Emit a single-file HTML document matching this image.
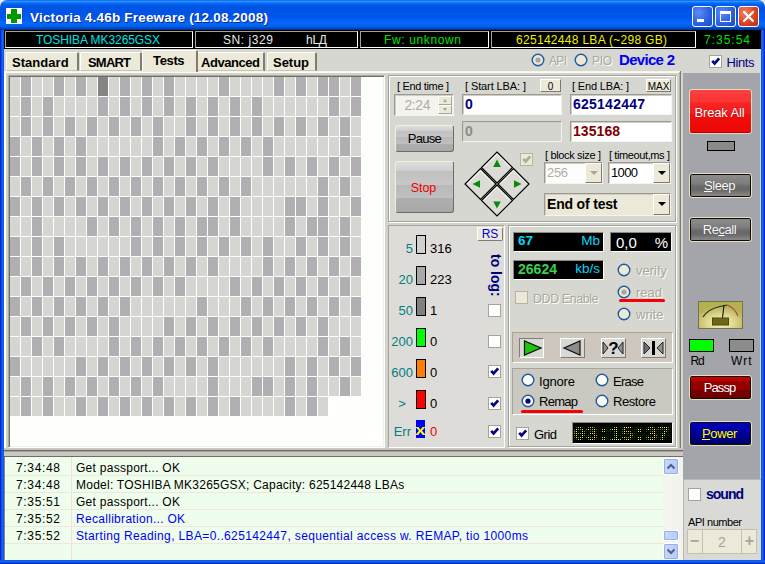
<!DOCTYPE html>
<html><head><meta charset="utf-8"><title>Victoria 4.46b Freeware</title>
<style>
html,body{margin:0;padding:0;background:#ece9d8;overflow:hidden;}
#w{position:relative;width:765px;height:564px;overflow:hidden;font-family:"Liberation Sans",sans-serif;}
#w div{position:absolute;}
.t{white-space:pre;}
</style></head>
<body><div id="w">
<div style="left:0px;top:0px;width:765px;height:30px;border-radius:7px 7px 0 0;background:linear-gradient(to bottom,#0058ee 0%,#3593ff 4%,#288eff 6%,#127dff 8%,#036ffc 10%,#0262ee 14%,#0057e5 20%,#0054e3 24%,#0055eb 56%,#005bf5 66%,#026afe 76%,#0062ef 86%,#0052d6 92%,#0040ab 96%,#003092 100%);"></div>
<div style="left:6px;top:8px;width:16px;height:16px;background:#fff;"></div>
<div style="left:11px;top:9px;width:6px;height:14px;background:#009a00;"></div>
<div style="left:7px;top:14px;width:14px;height:5px;background:#009a00;"></div>
<div class="t" style="left:30px;top:8.6px;height:18px;line-height:18px;font-size:13.5px;color:#fff;letter-spacing:0.20px;font-weight:bold;text-shadow:1px 1px 0 #0a2a8a;">Victoria 4.46b Freeware (12.08.2008)</div>
<div style="left:692px;top:6px;width:21px;height:21px;border:1px solid #fff;border-radius:3px;box-sizing:border-box;background:radial-gradient(circle at 30% 30%,#5a8cf8 0%,#2a5fe0 60%,#1c48c8 100%);"><div style="left:4px;top:12px;width:7px;height:3px;background:#fff"></div></div>
<div style="left:715px;top:6px;width:21px;height:21px;border:1px solid #fff;border-radius:3px;box-sizing:border-box;background:radial-gradient(circle at 30% 30%,#5a8cf8 0%,#2a5fe0 60%,#1c48c8 100%);"><div style="left:4px;top:4px;width:11px;height:11px;box-sizing:border-box;border:1px solid #fff;border-top:3px solid #fff"></div></div>
<div style="left:738px;top:6px;width:21px;height:21px;border:1px solid #fff;border-radius:3px;box-sizing:border-box;background:radial-gradient(circle at 30% 30%,#f08060 0%,#d84020 60%,#b82c10 100%);"><svg width="19" height="19" style="position:absolute;left:0;top:0"><path d="M5 5 L14 14 M14 5 L5 14" stroke="#fff" stroke-width="2.2" stroke-linecap="round"/></svg></div>
<div style="left:4px;top:30px;width:757px;height:530px;background:#d6d7d1;"></div>
<div style="left:4px;top:30px;width:757px;height:19px;background:#000;"></div>
<div style="left:5px;top:31px;width:188px;height:17px;box-sizing:border-box;border:1px solid;border-color:#a8a292 #fff #fff #a8a292;"></div>
<div style="left:195px;top:31px;width:163px;height:17px;box-sizing:border-box;border:1px solid;border-color:#a8a292 #fff #fff #a8a292;"></div>
<div style="left:360px;top:31px;width:129px;height:17px;box-sizing:border-box;border:1px solid;border-color:#a8a292 #fff #fff #a8a292;"></div>
<div style="left:491px;top:31px;width:205px;height:17px;box-sizing:border-box;border:1px solid;border-color:#a8a292 #fff #fff #a8a292;"></div>
<div class="t" style="left:36px;top:32px;height:16px;line-height:16px;font-size:12px;color:#00e0e0;letter-spacing:-0.07px;">TOSHIBA MK3265GSX</div>
<div class="t" style="left:223px;top:32px;height:16px;line-height:16px;font-size:12px;color:#e8e8e8;letter-spacing:0.57px;">SN: j329</div>
<div class="t" style="left:306px;top:32px;height:16px;line-height:16px;font-size:12px;color:#e8e8e8;letter-spacing:-0.24px;">hLД</div>
<div class="t" style="left:384px;top:32px;height:16px;line-height:16px;font-size:12px;color:#00e000;letter-spacing:0.63px;">Fw: unknown</div>
<div class="t" style="left:516px;top:32px;height:16px;line-height:16px;font-size:12px;color:#f0f000;letter-spacing:0.30px;">625142448 LBA (~298 GB)</div>
<div class="t" style="left:704px;top:32px;height:16px;line-height:16px;font-size:12px;color:#00e000;letter-spacing:0.99px;">7:35:54</div>
<div style="left:6px;top:52px;width:73px;height:19px;background:#ece9d8;box-sizing:border-box;border-left:1px solid #fff;border-top:1px solid #fff;border-right:2px solid #807c70;border-bottom:1px solid #c8c4b4;border-radius:2px 2px 0 0;"></div>
<div class="t" style="left:12px;top:55px;height:16px;line-height:16px;font-size:13px;color:#000;letter-spacing:0.04px;font-weight:bold;">Standard</div>
<div style="left:80px;top:52px;width:62px;height:19px;background:#ece9d8;box-sizing:border-box;border-left:1px solid #fff;border-top:1px solid #fff;border-right:2px solid #807c70;border-bottom:1px solid #c8c4b4;border-radius:2px 2px 0 0;"></div>
<div class="t" style="left:88px;top:55px;height:16px;line-height:16px;font-size:13px;color:#000;letter-spacing:-0.80px;font-weight:bold;">SMART</div>
<div style="left:197px;top:52px;width:68px;height:19px;background:#ece9d8;box-sizing:border-box;border-left:1px solid #fff;border-top:1px solid #fff;border-right:2px solid #807c70;border-bottom:1px solid #c8c4b4;border-radius:2px 2px 0 0;"></div>
<div class="t" style="left:201px;top:55px;height:16px;line-height:16px;font-size:13px;color:#000;letter-spacing:-0.45px;font-weight:bold;">Advanced</div>
<div style="left:267px;top:52px;width:50px;height:19px;background:#ece9d8;box-sizing:border-box;border-left:1px solid #fff;border-top:1px solid #fff;border-right:2px solid #807c70;border-bottom:1px solid #c8c4b4;border-radius:2px 2px 0 0;"></div>
<div class="t" style="left:273px;top:55px;height:16px;line-height:16px;font-size:13px;color:#000;letter-spacing:-0.03px;font-weight:bold;">Setup</div>
<div style="left:4px;top:71px;width:677px;height:380px;background:#d2d2cd;"></div>
<div style="left:4px;top:71px;width:676px;height:2px;background:linear-gradient(to bottom,#f4f2e6,#fff);"></div>
<div style="left:4px;top:71px;width:2px;height:380px;background:#fff;"></div>
<div style="left:680px;top:71px;width:1px;height:380px;background:#807c6c;"></div>
<div style="left:679px;top:72px;width:1px;height:379px;background:#b4b4ac;"></div>
<div style="left:142px;top:50px;width:56px;height:22px;background:#ece9d8;box-sizing:border-box;border-left:1px solid #fff;border-top:1px solid #fff;border-right:2px solid #807c70;border-radius:2px 2px 0 0;"></div>
<div class="t" style="left:153px;top:53px;height:16px;line-height:16px;font-size:13px;color:#000;letter-spacing:-0.35px;font-weight:bold;">Tests</div>
<svg width="14" height="14" style="position:absolute;left:530.5px;top:52.5px"><circle cx="7" cy="7" r="5.8" fill="#ece9d8" stroke="#1f5a9e" stroke-width="1.4"/><circle cx="7" cy="7" r="2.6" fill="#a8a498"/></svg>
<div class="t" style="left:549px;top:54px;height:15px;line-height:15px;font-size:12px;color:#aca899;letter-spacing:-0.67px;text-shadow:1px 1px 0 #fff;">API</div>
<svg width="14" height="14" style="position:absolute;left:574px;top:52.5px"><circle cx="7" cy="7" r="5.8" fill="#ece9d8" stroke="#1f5a9e" stroke-width="1.4"/></svg>
<div class="t" style="left:592px;top:54px;height:15px;line-height:15px;font-size:12px;color:#aca899;letter-spacing:-0.34px;text-shadow:1px 1px 0 #fff;">PIO</div>
<div class="t" style="left:619px;top:50px;height:19px;line-height:19px;font-size:15px;color:#0000f0;letter-spacing:-0.70px;font-weight:bold;">Device 2</div>
<div style="left:709px;top:55px;width:13px;height:13px;box-sizing:border-box;border:1px solid #a4a498;background:#fff;"><svg width="13" height="13" style="position:absolute;left:-1px;top:-1px"><path d="M3.2 5.8 L5.6 8.4 L10.2 3.4" fill="none" stroke="#08087c" stroke-width="2.7"/></svg></div>
<div class="t" style="left:726.5px;top:54px;height:18px;line-height:18px;font-size:13px;color:#000080;letter-spacing:-0.41px;">Hints</div>
<div style="left:8px;top:75px;width:377px;height:373px;box-sizing:border-box;border:1px solid;border-color:#aca899 #fff #fff #aca899;background:#fcfffc;box-shadow:inset 1px 1px 0 #716f64,inset -1px -1px 0 #f1efe2;"></div>
<svg width="352" height="340" shape-rendering="crispEdges" style="position:absolute;left:10px;top:77px"><rect x="0" y="0" width="10" height="19" fill="#d5d6d1"/><rect x="11" y="0" width="10" height="19" fill="#b1afb2"/><rect x="22" y="0" width="10" height="19" fill="#d5d6d1"/><rect x="33" y="0" width="10" height="19" fill="#d5d6d1"/><rect x="44" y="0" width="10" height="19" fill="#b1afb2"/><rect x="55" y="0" width="10" height="19" fill="#d5d6d1"/><rect x="66" y="0" width="10" height="19" fill="#b1afb2"/><rect x="77" y="0" width="10" height="19" fill="#d5d6d1"/><rect x="88" y="0" width="10" height="19" fill="#858585"/><rect x="99" y="0" width="10" height="19" fill="#d5d6d1"/><rect x="110" y="0" width="10" height="19" fill="#b1afb2"/><rect x="121" y="0" width="10" height="19" fill="#d5d6d1"/><rect x="132" y="0" width="10" height="19" fill="#b1afb2"/><rect x="143" y="0" width="10" height="19" fill="#d5d6d1"/><rect x="154" y="0" width="10" height="19" fill="#b1afb2"/><rect x="165" y="0" width="10" height="19" fill="#d5d6d1"/><rect x="176" y="0" width="10" height="19" fill="#d5d6d1"/><rect x="187" y="0" width="10" height="19" fill="#d5d6d1"/><rect x="198" y="0" width="10" height="19" fill="#d5d6d1"/><rect x="209" y="0" width="10" height="19" fill="#b1afb2"/><rect x="220" y="0" width="10" height="19" fill="#d5d6d1"/><rect x="231" y="0" width="10" height="19" fill="#d5d6d1"/><rect x="242" y="0" width="10" height="19" fill="#d5d6d1"/><rect x="253" y="0" width="10" height="19" fill="#d5d6d1"/><rect x="264" y="0" width="10" height="19" fill="#b1afb2"/><rect x="275" y="0" width="10" height="19" fill="#d5d6d1"/><rect x="286" y="0" width="10" height="19" fill="#b1afb2"/><rect x="297" y="0" width="10" height="19" fill="#d5d6d1"/><rect x="308" y="0" width="10" height="19" fill="#b1afb2"/><rect x="319" y="0" width="10" height="19" fill="#b1afb2"/><rect x="330" y="0" width="10" height="19" fill="#d5d6d1"/><rect x="341" y="0" width="10" height="19" fill="#b1afb2"/><rect x="0" y="20" width="10" height="19" fill="#d5d6d1"/><rect x="11" y="20" width="10" height="19" fill="#b1afb2"/><rect x="22" y="20" width="10" height="19" fill="#d5d6d1"/><rect x="33" y="20" width="10" height="19" fill="#b1afb2"/><rect x="44" y="20" width="10" height="19" fill="#d5d6d1"/><rect x="55" y="20" width="10" height="19" fill="#d5d6d1"/><rect x="66" y="20" width="10" height="19" fill="#d5d6d1"/><rect x="77" y="20" width="10" height="19" fill="#d5d6d1"/><rect x="88" y="20" width="10" height="19" fill="#b1afb2"/><rect x="99" y="20" width="10" height="19" fill="#d5d6d1"/><rect x="110" y="20" width="10" height="19" fill="#b1afb2"/><rect x="121" y="20" width="10" height="19" fill="#d5d6d1"/><rect x="132" y="20" width="10" height="19" fill="#b1afb2"/><rect x="143" y="20" width="10" height="19" fill="#d5d6d1"/><rect x="154" y="20" width="10" height="19" fill="#b1afb2"/><rect x="165" y="20" width="10" height="19" fill="#d5d6d1"/><rect x="176" y="20" width="10" height="19" fill="#b1afb2"/><rect x="187" y="20" width="10" height="19" fill="#d5d6d1"/><rect x="198" y="20" width="10" height="19" fill="#b1afb2"/><rect x="209" y="20" width="10" height="19" fill="#d5d6d1"/><rect x="220" y="20" width="10" height="19" fill="#b1afb2"/><rect x="231" y="20" width="10" height="19" fill="#d5d6d1"/><rect x="242" y="20" width="10" height="19" fill="#b1afb2"/><rect x="253" y="20" width="10" height="19" fill="#d5d6d1"/><rect x="264" y="20" width="10" height="19" fill="#d5d6d1"/><rect x="275" y="20" width="10" height="19" fill="#d5d6d1"/><rect x="286" y="20" width="10" height="19" fill="#d5d6d1"/><rect x="297" y="20" width="10" height="19" fill="#d5d6d1"/><rect x="308" y="20" width="10" height="19" fill="#d5d6d1"/><rect x="319" y="20" width="10" height="19" fill="#b1afb2"/><rect x="330" y="20" width="10" height="19" fill="#d5d6d1"/><rect x="341" y="20" width="10" height="19" fill="#b1afb2"/><rect x="0" y="40" width="10" height="19" fill="#d5d6d1"/><rect x="11" y="40" width="10" height="19" fill="#b1afb2"/><rect x="22" y="40" width="10" height="19" fill="#d5d6d1"/><rect x="33" y="40" width="10" height="19" fill="#b1afb2"/><rect x="44" y="40" width="10" height="19" fill="#d5d6d1"/><rect x="55" y="40" width="10" height="19" fill="#b1afb2"/><rect x="66" y="40" width="10" height="19" fill="#d5d6d1"/><rect x="77" y="40" width="10" height="19" fill="#b1afb2"/><rect x="88" y="40" width="10" height="19" fill="#d5d6d1"/><rect x="99" y="40" width="10" height="19" fill="#b1afb2"/><rect x="110" y="40" width="10" height="19" fill="#d5d6d1"/><rect x="121" y="40" width="10" height="19" fill="#b1afb2"/><rect x="132" y="40" width="10" height="19" fill="#d5d6d1"/><rect x="143" y="40" width="10" height="19" fill="#b1afb2"/><rect x="154" y="40" width="10" height="19" fill="#d5d6d1"/><rect x="165" y="40" width="10" height="19" fill="#d5d6d1"/><rect x="176" y="40" width="10" height="19" fill="#b1afb2"/><rect x="187" y="40" width="10" height="19" fill="#d5d6d1"/><rect x="198" y="40" width="10" height="19" fill="#b1afb2"/><rect x="209" y="40" width="10" height="19" fill="#d5d6d1"/><rect x="220" y="40" width="10" height="19" fill="#b1afb2"/><rect x="231" y="40" width="10" height="19" fill="#d5d6d1"/><rect x="242" y="40" width="10" height="19" fill="#b1afb2"/><rect x="253" y="40" width="10" height="19" fill="#d5d6d1"/><rect x="264" y="40" width="10" height="19" fill="#b1afb2"/><rect x="275" y="40" width="10" height="19" fill="#d5d6d1"/><rect x="286" y="40" width="10" height="19" fill="#b1afb2"/><rect x="297" y="40" width="10" height="19" fill="#d5d6d1"/><rect x="308" y="40" width="10" height="19" fill="#b1afb2"/><rect x="319" y="40" width="10" height="19" fill="#d5d6d1"/><rect x="330" y="40" width="10" height="19" fill="#b1afb2"/><rect x="341" y="40" width="10" height="19" fill="#d5d6d1"/><rect x="0" y="60" width="10" height="19" fill="#b1afb2"/><rect x="11" y="60" width="10" height="19" fill="#d5d6d1"/><rect x="22" y="60" width="10" height="19" fill="#b1afb2"/><rect x="33" y="60" width="10" height="19" fill="#d5d6d1"/><rect x="44" y="60" width="10" height="19" fill="#b1afb2"/><rect x="55" y="60" width="10" height="19" fill="#d5d6d1"/><rect x="66" y="60" width="10" height="19" fill="#b1afb2"/><rect x="77" y="60" width="10" height="19" fill="#d5d6d1"/><rect x="88" y="60" width="10" height="19" fill="#d5d6d1"/><rect x="99" y="60" width="10" height="19" fill="#d5d6d1"/><rect x="110" y="60" width="10" height="19" fill="#d5d6d1"/><rect x="121" y="60" width="10" height="19" fill="#d5d6d1"/><rect x="132" y="60" width="10" height="19" fill="#d5d6d1"/><rect x="143" y="60" width="10" height="19" fill="#b1afb2"/><rect x="154" y="60" width="10" height="19" fill="#d5d6d1"/><rect x="165" y="60" width="10" height="19" fill="#b1afb2"/><rect x="176" y="60" width="10" height="19" fill="#d5d6d1"/><rect x="187" y="60" width="10" height="19" fill="#b1afb2"/><rect x="198" y="60" width="10" height="19" fill="#d5d6d1"/><rect x="209" y="60" width="10" height="19" fill="#b1afb2"/><rect x="220" y="60" width="10" height="19" fill="#d5d6d1"/><rect x="231" y="60" width="10" height="19" fill="#b1afb2"/><rect x="242" y="60" width="10" height="19" fill="#d5d6d1"/><rect x="253" y="60" width="10" height="19" fill="#b1afb2"/><rect x="264" y="60" width="10" height="19" fill="#d5d6d1"/><rect x="275" y="60" width="10" height="19" fill="#d5d6d1"/><rect x="286" y="60" width="10" height="19" fill="#d5d6d1"/><rect x="297" y="60" width="10" height="19" fill="#d5d6d1"/><rect x="308" y="60" width="10" height="19" fill="#d5d6d1"/><rect x="319" y="60" width="10" height="19" fill="#d5d6d1"/><rect x="330" y="60" width="10" height="19" fill="#b1afb2"/><rect x="341" y="60" width="10" height="19" fill="#d5d6d1"/><rect x="0" y="80" width="10" height="19" fill="#b1afb2"/><rect x="11" y="80" width="10" height="19" fill="#d5d6d1"/><rect x="22" y="80" width="10" height="19" fill="#b1afb2"/><rect x="33" y="80" width="10" height="19" fill="#d5d6d1"/><rect x="44" y="80" width="10" height="19" fill="#b1afb2"/><rect x="55" y="80" width="10" height="19" fill="#d5d6d1"/><rect x="66" y="80" width="10" height="19" fill="#b1afb2"/><rect x="77" y="80" width="10" height="19" fill="#d5d6d1"/><rect x="88" y="80" width="10" height="19" fill="#b1afb2"/><rect x="99" y="80" width="10" height="19" fill="#d5d6d1"/><rect x="110" y="80" width="10" height="19" fill="#b1afb2"/><rect x="121" y="80" width="10" height="19" fill="#d5d6d1"/><rect x="132" y="80" width="10" height="19" fill="#b1afb2"/><rect x="143" y="80" width="10" height="19" fill="#d5d6d1"/><rect x="154" y="80" width="10" height="19" fill="#b1afb2"/><rect x="165" y="80" width="10" height="19" fill="#d5d6d1"/><rect x="176" y="80" width="10" height="19" fill="#b1afb2"/><rect x="187" y="80" width="10" height="19" fill="#d5d6d1"/><rect x="198" y="80" width="10" height="19" fill="#b1afb2"/><rect x="209" y="80" width="10" height="19" fill="#d5d6d1"/><rect x="220" y="80" width="10" height="19" fill="#d5d6d1"/><rect x="231" y="80" width="10" height="19" fill="#d5d6d1"/><rect x="242" y="80" width="10" height="19" fill="#d5d6d1"/><rect x="253" y="80" width="10" height="19" fill="#b1afb2"/><rect x="264" y="80" width="10" height="19" fill="#d5d6d1"/><rect x="275" y="80" width="10" height="19" fill="#b1afb2"/><rect x="286" y="80" width="10" height="19" fill="#d5d6d1"/><rect x="297" y="80" width="10" height="19" fill="#b1afb2"/><rect x="308" y="80" width="10" height="19" fill="#d5d6d1"/><rect x="319" y="80" width="10" height="19" fill="#b1afb2"/><rect x="330" y="80" width="10" height="19" fill="#d5d6d1"/><rect x="341" y="80" width="10" height="19" fill="#b1afb2"/><rect x="0" y="100" width="10" height="19" fill="#d5d6d1"/><rect x="11" y="100" width="10" height="19" fill="#b1afb2"/><rect x="22" y="100" width="10" height="19" fill="#d5d6d1"/><rect x="33" y="100" width="10" height="19" fill="#b1afb2"/><rect x="44" y="100" width="10" height="19" fill="#d5d6d1"/><rect x="55" y="100" width="10" height="19" fill="#b1afb2"/><rect x="66" y="100" width="10" height="19" fill="#d5d6d1"/><rect x="77" y="100" width="10" height="19" fill="#b1afb2"/><rect x="88" y="100" width="10" height="19" fill="#d5d6d1"/><rect x="99" y="100" width="10" height="19" fill="#b1afb2"/><rect x="110" y="100" width="10" height="19" fill="#d5d6d1"/><rect x="121" y="100" width="10" height="19" fill="#b1afb2"/><rect x="132" y="100" width="10" height="19" fill="#d5d6d1"/><rect x="143" y="100" width="10" height="19" fill="#b1afb2"/><rect x="154" y="100" width="10" height="19" fill="#d5d6d1"/><rect x="165" y="100" width="10" height="19" fill="#b1afb2"/><rect x="176" y="100" width="10" height="19" fill="#d5d6d1"/><rect x="187" y="100" width="10" height="19" fill="#b1afb2"/><rect x="198" y="100" width="10" height="19" fill="#d5d6d1"/><rect x="209" y="100" width="10" height="19" fill="#b1afb2"/><rect x="220" y="100" width="10" height="19" fill="#d5d6d1"/><rect x="231" y="100" width="10" height="19" fill="#b1afb2"/><rect x="242" y="100" width="10" height="19" fill="#d5d6d1"/><rect x="253" y="100" width="10" height="19" fill="#d5d6d1"/><rect x="264" y="100" width="10" height="19" fill="#d5d6d1"/><rect x="275" y="100" width="10" height="19" fill="#d5d6d1"/><rect x="286" y="100" width="10" height="19" fill="#d5d6d1"/><rect x="297" y="100" width="10" height="19" fill="#d5d6d1"/><rect x="308" y="100" width="10" height="19" fill="#b1afb2"/><rect x="319" y="100" width="10" height="19" fill="#d5d6d1"/><rect x="330" y="100" width="10" height="19" fill="#b1afb2"/><rect x="341" y="100" width="10" height="19" fill="#d5d6d1"/><rect x="0" y="120" width="10" height="19" fill="#b1afb2"/><rect x="11" y="120" width="10" height="19" fill="#d5d6d1"/><rect x="22" y="120" width="10" height="19" fill="#b1afb2"/><rect x="33" y="120" width="10" height="19" fill="#d5d6d1"/><rect x="44" y="120" width="10" height="19" fill="#b1afb2"/><rect x="55" y="120" width="10" height="19" fill="#d5d6d1"/><rect x="66" y="120" width="10" height="19" fill="#b1afb2"/><rect x="77" y="120" width="10" height="19" fill="#d5d6d1"/><rect x="88" y="120" width="10" height="19" fill="#b1afb2"/><rect x="99" y="120" width="10" height="19" fill="#d5d6d1"/><rect x="110" y="120" width="10" height="19" fill="#b1afb2"/><rect x="121" y="120" width="10" height="19" fill="#d5d6d1"/><rect x="132" y="120" width="10" height="19" fill="#b1afb2"/><rect x="143" y="120" width="10" height="19" fill="#d5d6d1"/><rect x="154" y="120" width="10" height="19" fill="#b1afb2"/><rect x="165" y="120" width="10" height="19" fill="#d5d6d1"/><rect x="176" y="120" width="10" height="19" fill="#b1afb2"/><rect x="187" y="120" width="10" height="19" fill="#d5d6d1"/><rect x="198" y="120" width="10" height="19" fill="#b1afb2"/><rect x="209" y="120" width="10" height="19" fill="#d5d6d1"/><rect x="220" y="120" width="10" height="19" fill="#b1afb2"/><rect x="231" y="120" width="10" height="19" fill="#d5d6d1"/><rect x="242" y="120" width="10" height="19" fill="#d5d6d1"/><rect x="253" y="120" width="10" height="19" fill="#d5d6d1"/><rect x="264" y="120" width="10" height="19" fill="#d5d6d1"/><rect x="275" y="120" width="10" height="19" fill="#b1afb2"/><rect x="286" y="120" width="10" height="19" fill="#b1afb2"/><rect x="297" y="120" width="10" height="19" fill="#d5d6d1"/><rect x="308" y="120" width="10" height="19" fill="#b1afb2"/><rect x="319" y="120" width="10" height="19" fill="#d5d6d1"/><rect x="330" y="120" width="10" height="19" fill="#d5d6d1"/><rect x="341" y="120" width="10" height="19" fill="#b1afb2"/><rect x="0" y="140" width="10" height="19" fill="#d5d6d1"/><rect x="11" y="140" width="10" height="19" fill="#d5d6d1"/><rect x="22" y="140" width="10" height="19" fill="#b1afb2"/><rect x="33" y="140" width="10" height="19" fill="#d5d6d1"/><rect x="44" y="140" width="10" height="19" fill="#d5d6d1"/><rect x="55" y="140" width="10" height="19" fill="#d5d6d1"/><rect x="66" y="140" width="10" height="19" fill="#d5d6d1"/><rect x="77" y="140" width="10" height="19" fill="#b1afb2"/><rect x="88" y="140" width="10" height="19" fill="#d5d6d1"/><rect x="99" y="140" width="10" height="19" fill="#b1afb2"/><rect x="110" y="140" width="10" height="19" fill="#d5d6d1"/><rect x="121" y="140" width="10" height="19" fill="#b1afb2"/><rect x="132" y="140" width="10" height="19" fill="#d5d6d1"/><rect x="143" y="140" width="10" height="19" fill="#b1afb2"/><rect x="154" y="140" width="10" height="19" fill="#d5d6d1"/><rect x="165" y="140" width="10" height="19" fill="#b1afb2"/><rect x="176" y="140" width="10" height="19" fill="#d5d6d1"/><rect x="187" y="140" width="10" height="19" fill="#b1afb2"/><rect x="198" y="140" width="10" height="19" fill="#b1afb2"/><rect x="209" y="140" width="10" height="19" fill="#d5d6d1"/><rect x="220" y="140" width="10" height="19" fill="#b1afb2"/><rect x="231" y="140" width="10" height="19" fill="#d5d6d1"/><rect x="242" y="140" width="10" height="19" fill="#d5d6d1"/><rect x="253" y="140" width="10" height="19" fill="#d5d6d1"/><rect x="264" y="140" width="10" height="19" fill="#d5d6d1"/><rect x="275" y="140" width="10" height="19" fill="#b1afb2"/><rect x="286" y="140" width="10" height="19" fill="#d5d6d1"/><rect x="297" y="140" width="10" height="19" fill="#b1afb2"/><rect x="308" y="140" width="10" height="19" fill="#b1afb2"/><rect x="319" y="140" width="10" height="19" fill="#d5d6d1"/><rect x="330" y="140" width="10" height="19" fill="#b1afb2"/><rect x="341" y="140" width="10" height="19" fill="#d5d6d1"/><rect x="0" y="160" width="10" height="19" fill="#b1afb2"/><rect x="11" y="160" width="10" height="19" fill="#d5d6d1"/><rect x="22" y="160" width="10" height="19" fill="#b1afb2"/><rect x="33" y="160" width="10" height="19" fill="#d5d6d1"/><rect x="44" y="160" width="10" height="19" fill="#b1afb2"/><rect x="55" y="160" width="10" height="19" fill="#d5d6d1"/><rect x="66" y="160" width="10" height="19" fill="#d5d6d1"/><rect x="77" y="160" width="10" height="19" fill="#d5d6d1"/><rect x="88" y="160" width="10" height="19" fill="#d5d6d1"/><rect x="99" y="160" width="10" height="19" fill="#d5d6d1"/><rect x="110" y="160" width="10" height="19" fill="#d5d6d1"/><rect x="121" y="160" width="10" height="19" fill="#b1afb2"/><rect x="132" y="160" width="10" height="19" fill="#d5d6d1"/><rect x="143" y="160" width="10" height="19" fill="#b1afb2"/><rect x="154" y="160" width="10" height="19" fill="#d5d6d1"/><rect x="165" y="160" width="10" height="19" fill="#b1afb2"/><rect x="176" y="160" width="10" height="19" fill="#d5d6d1"/><rect x="187" y="160" width="10" height="19" fill="#b1afb2"/><rect x="198" y="160" width="10" height="19" fill="#d5d6d1"/><rect x="209" y="160" width="10" height="19" fill="#b1afb2"/><rect x="220" y="160" width="10" height="19" fill="#d5d6d1"/><rect x="231" y="160" width="10" height="19" fill="#b1afb2"/><rect x="242" y="160" width="10" height="19" fill="#d5d6d1"/><rect x="253" y="160" width="10" height="19" fill="#b1afb2"/><rect x="264" y="160" width="10" height="19" fill="#d5d6d1"/><rect x="275" y="160" width="10" height="19" fill="#d5d6d1"/><rect x="286" y="160" width="10" height="19" fill="#b1afb2"/><rect x="297" y="160" width="10" height="19" fill="#d5d6d1"/><rect x="308" y="160" width="10" height="19" fill="#b1afb2"/><rect x="319" y="160" width="10" height="19" fill="#d5d6d1"/><rect x="330" y="160" width="10" height="19" fill="#b1afb2"/><rect x="341" y="160" width="10" height="19" fill="#d5d6d1"/><rect x="0" y="180" width="10" height="19" fill="#b1afb2"/><rect x="11" y="180" width="10" height="19" fill="#d5d6d1"/><rect x="22" y="180" width="10" height="19" fill="#b1afb2"/><rect x="33" y="180" width="10" height="19" fill="#d5d6d1"/><rect x="44" y="180" width="10" height="19" fill="#b1afb2"/><rect x="55" y="180" width="10" height="19" fill="#d5d6d1"/><rect x="66" y="180" width="10" height="19" fill="#b1afb2"/><rect x="77" y="180" width="10" height="19" fill="#d5d6d1"/><rect x="88" y="180" width="10" height="19" fill="#b1afb2"/><rect x="99" y="180" width="10" height="19" fill="#d5d6d1"/><rect x="110" y="180" width="10" height="19" fill="#b1afb2"/><rect x="121" y="180" width="10" height="19" fill="#d5d6d1"/><rect x="132" y="180" width="10" height="19" fill="#b1afb2"/><rect x="143" y="180" width="10" height="19" fill="#d5d6d1"/><rect x="154" y="180" width="10" height="19" fill="#b1afb2"/><rect x="165" y="180" width="10" height="19" fill="#d5d6d1"/><rect x="176" y="180" width="10" height="19" fill="#b1afb2"/><rect x="187" y="180" width="10" height="19" fill="#d5d6d1"/><rect x="198" y="180" width="10" height="19" fill="#b1afb2"/><rect x="209" y="180" width="10" height="19" fill="#d5d6d1"/><rect x="220" y="180" width="10" height="19" fill="#d5d6d1"/><rect x="231" y="180" width="10" height="19" fill="#d5d6d1"/><rect x="242" y="180" width="10" height="19" fill="#d5d6d1"/><rect x="253" y="180" width="10" height="19" fill="#b1afb2"/><rect x="264" y="180" width="10" height="19" fill="#d5d6d1"/><rect x="275" y="180" width="10" height="19" fill="#b1afb2"/><rect x="286" y="180" width="10" height="19" fill="#d5d6d1"/><rect x="297" y="180" width="10" height="19" fill="#b1afb2"/><rect x="308" y="180" width="10" height="19" fill="#d5d6d1"/><rect x="319" y="180" width="10" height="19" fill="#b1afb2"/><rect x="330" y="180" width="10" height="19" fill="#d5d6d1"/><rect x="341" y="180" width="10" height="19" fill="#b1afb2"/><rect x="0" y="200" width="10" height="19" fill="#d5d6d1"/><rect x="11" y="200" width="10" height="19" fill="#b1afb2"/><rect x="22" y="200" width="10" height="19" fill="#d5d6d1"/><rect x="33" y="200" width="10" height="19" fill="#b1afb2"/><rect x="44" y="200" width="10" height="19" fill="#d5d6d1"/><rect x="55" y="200" width="10" height="19" fill="#b1afb2"/><rect x="66" y="200" width="10" height="19" fill="#d5d6d1"/><rect x="77" y="200" width="10" height="19" fill="#b1afb2"/><rect x="88" y="200" width="10" height="19" fill="#d5d6d1"/><rect x="99" y="200" width="10" height="19" fill="#b1afb2"/><rect x="110" y="200" width="10" height="19" fill="#d5d6d1"/><rect x="121" y="200" width="10" height="19" fill="#b1afb2"/><rect x="132" y="200" width="10" height="19" fill="#d5d6d1"/><rect x="143" y="200" width="10" height="19" fill="#b1afb2"/><rect x="154" y="200" width="10" height="19" fill="#d5d6d1"/><rect x="165" y="200" width="10" height="19" fill="#b1afb2"/><rect x="176" y="200" width="10" height="19" fill="#d5d6d1"/><rect x="187" y="200" width="10" height="19" fill="#d5d6d1"/><rect x="198" y="200" width="10" height="19" fill="#d5d6d1"/><rect x="209" y="200" width="10" height="19" fill="#d5d6d1"/><rect x="220" y="200" width="10" height="19" fill="#b1afb2"/><rect x="231" y="200" width="10" height="19" fill="#d5d6d1"/><rect x="242" y="200" width="10" height="19" fill="#b1afb2"/><rect x="253" y="200" width="10" height="19" fill="#d5d6d1"/><rect x="264" y="200" width="10" height="19" fill="#b1afb2"/><rect x="275" y="200" width="10" height="19" fill="#d5d6d1"/><rect x="286" y="200" width="10" height="19" fill="#b1afb2"/><rect x="297" y="200" width="10" height="19" fill="#d5d6d1"/><rect x="308" y="200" width="10" height="19" fill="#b1afb2"/><rect x="319" y="200" width="10" height="19" fill="#d5d6d1"/><rect x="330" y="200" width="10" height="19" fill="#b1afb2"/><rect x="341" y="200" width="10" height="19" fill="#d5d6d1"/><rect x="0" y="220" width="10" height="19" fill="#b1afb2"/><rect x="11" y="220" width="10" height="19" fill="#d5d6d1"/><rect x="22" y="220" width="10" height="19" fill="#b1afb2"/><rect x="33" y="220" width="10" height="19" fill="#d5d6d1"/><rect x="44" y="220" width="10" height="19" fill="#b1afb2"/><rect x="55" y="220" width="10" height="19" fill="#d5d6d1"/><rect x="66" y="220" width="10" height="19" fill="#b1afb2"/><rect x="77" y="220" width="10" height="19" fill="#d5d6d1"/><rect x="88" y="220" width="10" height="19" fill="#b1afb2"/><rect x="99" y="220" width="10" height="19" fill="#d5d6d1"/><rect x="110" y="220" width="10" height="19" fill="#b1afb2"/><rect x="121" y="220" width="10" height="19" fill="#d5d6d1"/><rect x="132" y="220" width="10" height="19" fill="#d5d6d1"/><rect x="143" y="220" width="10" height="19" fill="#d5d6d1"/><rect x="154" y="220" width="10" height="19" fill="#d5d6d1"/><rect x="165" y="220" width="10" height="19" fill="#d5d6d1"/><rect x="176" y="220" width="10" height="19" fill="#d5d6d1"/><rect x="187" y="220" width="10" height="19" fill="#b1afb2"/><rect x="198" y="220" width="10" height="19" fill="#d5d6d1"/><rect x="209" y="220" width="10" height="19" fill="#d5d6d1"/><rect x="220" y="220" width="10" height="19" fill="#d5d6d1"/><rect x="231" y="220" width="10" height="19" fill="#b1afb2"/><rect x="242" y="220" width="10" height="19" fill="#d5d6d1"/><rect x="253" y="220" width="10" height="19" fill="#b1afb2"/><rect x="264" y="220" width="10" height="19" fill="#d5d6d1"/><rect x="275" y="220" width="10" height="19" fill="#b1afb2"/><rect x="286" y="220" width="10" height="19" fill="#d5d6d1"/><rect x="297" y="220" width="10" height="19" fill="#b1afb2"/><rect x="308" y="220" width="10" height="19" fill="#d5d6d1"/><rect x="319" y="220" width="10" height="19" fill="#b1afb2"/><rect x="330" y="220" width="10" height="19" fill="#d5d6d1"/><rect x="341" y="220" width="10" height="19" fill="#b1afb2"/><rect x="0" y="240" width="10" height="19" fill="#d5d6d1"/><rect x="11" y="240" width="10" height="19" fill="#b1afb2"/><rect x="22" y="240" width="10" height="19" fill="#d5d6d1"/><rect x="33" y="240" width="10" height="19" fill="#b1afb2"/><rect x="44" y="240" width="10" height="19" fill="#d5d6d1"/><rect x="55" y="240" width="10" height="19" fill="#b1afb2"/><rect x="66" y="240" width="10" height="19" fill="#d5d6d1"/><rect x="77" y="240" width="10" height="19" fill="#b1afb2"/><rect x="88" y="240" width="10" height="19" fill="#d5d6d1"/><rect x="99" y="240" width="10" height="19" fill="#b1afb2"/><rect x="110" y="240" width="10" height="19" fill="#d5d6d1"/><rect x="121" y="240" width="10" height="19" fill="#d5d6d1"/><rect x="132" y="240" width="10" height="19" fill="#d5d6d1"/><rect x="143" y="240" width="10" height="19" fill="#d5d6d1"/><rect x="154" y="240" width="10" height="19" fill="#b1afb2"/><rect x="165" y="240" width="10" height="19" fill="#d5d6d1"/><rect x="176" y="240" width="10" height="19" fill="#b1afb2"/><rect x="187" y="240" width="10" height="19" fill="#d5d6d1"/><rect x="198" y="240" width="10" height="19" fill="#b1afb2"/><rect x="209" y="240" width="10" height="19" fill="#d5d6d1"/><rect x="220" y="240" width="10" height="19" fill="#b1afb2"/><rect x="231" y="240" width="10" height="19" fill="#d5d6d1"/><rect x="242" y="240" width="10" height="19" fill="#b1afb2"/><rect x="253" y="240" width="10" height="19" fill="#d5d6d1"/><rect x="264" y="240" width="10" height="19" fill="#b1afb2"/><rect x="275" y="240" width="10" height="19" fill="#d5d6d1"/><rect x="286" y="240" width="10" height="19" fill="#b1afb2"/><rect x="297" y="240" width="10" height="19" fill="#d5d6d1"/><rect x="308" y="240" width="10" height="19" fill="#b1afb2"/><rect x="319" y="240" width="10" height="19" fill="#d5d6d1"/><rect x="330" y="240" width="10" height="19" fill="#d5d6d1"/><rect x="341" y="240" width="10" height="19" fill="#d5d6d1"/><rect x="0" y="260" width="10" height="19" fill="#d5d6d1"/><rect x="11" y="260" width="10" height="19" fill="#d5d6d1"/><rect x="22" y="260" width="10" height="19" fill="#b1afb2"/><rect x="33" y="260" width="10" height="19" fill="#d5d6d1"/><rect x="44" y="260" width="10" height="19" fill="#b1afb2"/><rect x="55" y="260" width="10" height="19" fill="#d5d6d1"/><rect x="66" y="260" width="10" height="19" fill="#d5d6d1"/><rect x="77" y="260" width="10" height="19" fill="#d5d6d1"/><rect x="88" y="260" width="10" height="19" fill="#d5d6d1"/><rect x="99" y="260" width="10" height="19" fill="#b1afb2"/><rect x="110" y="260" width="10" height="19" fill="#d5d6d1"/><rect x="121" y="260" width="10" height="19" fill="#b1afb2"/><rect x="132" y="260" width="10" height="19" fill="#d5d6d1"/><rect x="143" y="260" width="10" height="19" fill="#b1afb2"/><rect x="154" y="260" width="10" height="19" fill="#d5d6d1"/><rect x="165" y="260" width="10" height="19" fill="#b1afb2"/><rect x="176" y="260" width="10" height="19" fill="#d5d6d1"/><rect x="187" y="260" width="10" height="19" fill="#b1afb2"/><rect x="198" y="260" width="10" height="19" fill="#d5d6d1"/><rect x="209" y="260" width="10" height="19" fill="#b1afb2"/><rect x="220" y="260" width="10" height="19" fill="#d5d6d1"/><rect x="231" y="260" width="10" height="19" fill="#b1afb2"/><rect x="242" y="260" width="10" height="19" fill="#d5d6d1"/><rect x="253" y="260" width="10" height="19" fill="#b1afb2"/><rect x="264" y="260" width="10" height="19" fill="#d5d6d1"/><rect x="275" y="260" width="10" height="19" fill="#d5d6d1"/><rect x="286" y="260" width="10" height="19" fill="#d5d6d1"/><rect x="297" y="260" width="10" height="19" fill="#d5d6d1"/><rect x="308" y="260" width="10" height="19" fill="#b1afb2"/><rect x="319" y="260" width="10" height="19" fill="#d5d6d1"/><rect x="330" y="260" width="10" height="19" fill="#b1afb2"/><rect x="341" y="260" width="10" height="19" fill="#d5d6d1"/><rect x="0" y="280" width="10" height="19" fill="#b1afb2"/><rect x="11" y="280" width="10" height="19" fill="#d5d6d1"/><rect x="22" y="280" width="10" height="19" fill="#d5d6d1"/><rect x="33" y="280" width="10" height="19" fill="#d5d6d1"/><rect x="44" y="280" width="10" height="19" fill="#d5d6d1"/><rect x="55" y="280" width="10" height="19" fill="#d5d6d1"/><rect x="66" y="280" width="10" height="19" fill="#b1afb2"/><rect x="77" y="280" width="10" height="19" fill="#d5d6d1"/><rect x="88" y="280" width="10" height="19" fill="#b1afb2"/><rect x="99" y="280" width="10" height="19" fill="#d5d6d1"/><rect x="110" y="280" width="10" height="19" fill="#b1afb2"/><rect x="121" y="280" width="10" height="19" fill="#d5d6d1"/><rect x="132" y="280" width="10" height="19" fill="#b1afb2"/><rect x="143" y="280" width="10" height="19" fill="#d5d6d1"/><rect x="154" y="280" width="10" height="19" fill="#b1afb2"/><rect x="165" y="280" width="10" height="19" fill="#d5d6d1"/><rect x="176" y="280" width="10" height="19" fill="#b1afb2"/><rect x="187" y="280" width="10" height="19" fill="#d5d6d1"/><rect x="198" y="280" width="10" height="19" fill="#b1afb2"/><rect x="209" y="280" width="10" height="19" fill="#d5d6d1"/><rect x="220" y="280" width="10" height="19" fill="#d5d6d1"/><rect x="231" y="280" width="10" height="19" fill="#d5d6d1"/><rect x="242" y="280" width="10" height="19" fill="#d5d6d1"/><rect x="253" y="280" width="10" height="19" fill="#d5d6d1"/><rect x="264" y="280" width="10" height="19" fill="#d5d6d1"/><rect x="275" y="280" width="10" height="19" fill="#b1afb2"/><rect x="286" y="280" width="10" height="19" fill="#d5d6d1"/><rect x="297" y="280" width="10" height="19" fill="#b1afb2"/><rect x="308" y="280" width="10" height="19" fill="#d5d6d1"/><rect x="319" y="280" width="10" height="19" fill="#b1afb2"/><rect x="330" y="280" width="10" height="19" fill="#d5d6d1"/><rect x="341" y="280" width="10" height="19" fill="#b1afb2"/><rect x="0" y="300" width="10" height="19" fill="#d5d6d1"/><rect x="11" y="300" width="10" height="19" fill="#b1afb2"/><rect x="22" y="300" width="10" height="19" fill="#d5d6d1"/><rect x="33" y="300" width="10" height="19" fill="#b1afb2"/><rect x="44" y="300" width="10" height="19" fill="#d5d6d1"/><rect x="55" y="300" width="10" height="19" fill="#b1afb2"/><rect x="66" y="300" width="10" height="19" fill="#d5d6d1"/><rect x="77" y="300" width="10" height="19" fill="#b1afb2"/><rect x="88" y="300" width="10" height="19" fill="#d5d6d1"/><rect x="99" y="300" width="10" height="19" fill="#b1afb2"/><rect x="110" y="300" width="10" height="19" fill="#d5d6d1"/><rect x="121" y="300" width="10" height="19" fill="#b1afb2"/><rect x="132" y="300" width="10" height="19" fill="#d5d6d1"/><rect x="143" y="300" width="10" height="19" fill="#b1afb2"/><rect x="154" y="300" width="10" height="19" fill="#d5d6d1"/><rect x="165" y="300" width="10" height="19" fill="#d5d6d1"/><rect x="176" y="300" width="10" height="19" fill="#d5d6d1"/><rect x="187" y="300" width="10" height="19" fill="#d5d6d1"/><rect x="198" y="300" width="10" height="19" fill="#b1afb2"/><rect x="209" y="300" width="10" height="19" fill="#d5d6d1"/><rect x="220" y="300" width="10" height="19" fill="#d5d6d1"/><rect x="231" y="300" width="10" height="19" fill="#d5d6d1"/><rect x="242" y="300" width="10" height="19" fill="#b1afb2"/><rect x="253" y="300" width="10" height="19" fill="#b1afb2"/><rect x="264" y="300" width="10" height="19" fill="#d5d6d1"/><rect x="275" y="300" width="10" height="19" fill="#b1afb2"/><rect x="286" y="300" width="10" height="19" fill="#d5d6d1"/><rect x="297" y="300" width="10" height="19" fill="#b1afb2"/><rect x="308" y="300" width="10" height="19" fill="#d5d6d1"/><rect x="319" y="300" width="10" height="19" fill="#d5d6d1"/><rect x="330" y="300" width="10" height="19" fill="#b1afb2"/><rect x="341" y="300" width="10" height="19" fill="#d5d6d1"/><rect x="0" y="320" width="10" height="19" fill="#d5d6d1"/><rect x="11" y="320" width="10" height="19" fill="#b1afb2"/><rect x="22" y="320" width="10" height="19" fill="#d5d6d1"/><rect x="33" y="320" width="10" height="19" fill="#b1afb2"/><rect x="44" y="320" width="10" height="19" fill="#d5d6d1"/><rect x="55" y="320" width="10" height="19" fill="#d5d6d1"/><rect x="66" y="320" width="10" height="19" fill="#b1afb2"/><rect x="77" y="320" width="10" height="19" fill="#d5d6d1"/><rect x="88" y="320" width="10" height="19" fill="#b1afb2"/><rect x="99" y="320" width="10" height="19" fill="#d5d6d1"/><rect x="110" y="320" width="10" height="19" fill="#b1afb2"/><rect x="121" y="320" width="10" height="19" fill="#d5d6d1"/><rect x="132" y="320" width="10" height="19" fill="#b1afb2"/><rect x="143" y="320" width="10" height="19" fill="#d5d6d1"/><rect x="154" y="320" width="10" height="19" fill="#b1afb2"/><rect x="165" y="320" width="10" height="19" fill="#d5d6d1"/><rect x="176" y="320" width="10" height="19" fill="#b1afb2"/><rect x="187" y="320" width="10" height="19" fill="#d5d6d1"/><rect x="198" y="320" width="10" height="19" fill="#b1afb2"/><rect x="209" y="320" width="10" height="19" fill="#d5d6d1"/><rect x="220" y="320" width="10" height="19" fill="#b1afb2"/><rect x="231" y="320" width="10" height="19" fill="#d5d6d1"/><rect x="242" y="320" width="10" height="19" fill="#d5d6d1"/><rect x="253" y="320" width="10" height="19" fill="#d5d6d1"/><rect x="264" y="320" width="10" height="19" fill="#d5d6d1"/><rect x="275" y="320" width="10" height="19" fill="#b1afb2"/><rect x="286" y="320" width="10" height="19" fill="#d5d6d1"/><rect x="297" y="320" width="10" height="19" fill="#b1afb2"/><rect x="308" y="320" width="10" height="19" fill="#d5d6d1"/></svg>
<div style="left:4px;top:448px;width:679px;height:9px;background:#c9c9c4;"></div>
<div style="left:4px;top:450px;width:679px;height:1px;background:#6c6458;"></div>
<div style="left:4px;top:451px;width:679px;height:1px;background:#a8a49c;"></div>
<div style="left:4px;top:456px;width:679px;height:1px;background:#746c64;"></div>
<div style="left:388px;top:75px;width:288px;height:147px;box-sizing:border-box;background:#d6d7d1;border:1px solid #a4a49c;box-shadow:inset 1px 1px 0 #fff,1px 1px 0 #fff;"></div>
<div class="t" style="left:397px;top:79px;height:14px;line-height:14px;font-size:11px;color:#000;letter-spacing:-0.33px;">[ End time ]</div>
<div class="t" style="left:465px;top:79px;height:14px;line-height:14px;font-size:11px;color:#000;letter-spacing:-0.10px;">[ Start LBA: ]</div>
<div class="t" style="left:572px;top:79px;height:14px;line-height:14px;font-size:11px;color:#000;letter-spacing:-0.15px;">[ End LBA: ]</div>
<div style="left:540px;top:79px;width:21px;height:13px;box-sizing:border-box;border:1px solid;border-color:#fff #807c70 #807c70 #fff;background:#ece9d8;"></div>
<div class="t" style="left:540px;top:80px;height:13px;line-height:13px;font-size:10px;color:#000;width:21px;text-align:center;">0</div>
<div style="left:646px;top:79px;width:25px;height:13px;box-sizing:border-box;border:1px solid;border-color:#fff #807c70 #807c70 #fff;background:#ece9d8;"></div>
<div class="t" style="left:646px;top:80px;height:13px;line-height:13px;font-size:10px;color:#000;width:25px;text-align:center;">MAX</div>
<div style="left:394px;top:94px;width:60px;height:22px;box-sizing:border-box;border:1px solid;border-color:#9c9a90 #f4f4f0 #f4f4f0 #9c9a90;background:#f4f3ee;box-shadow:inset 1px 1px 0 #d0cec4;"></div>
<div class="t" style="left:404.5px;top:97px;height:16px;line-height:16px;font-size:14px;color:#b0aea4;letter-spacing:-0.42px;">2:24</div>
<div style="left:438px;top:96px;width:14px;height:9px;box-sizing:border-box;border:1px solid;border-color:#fff #a8a498 #a8a498 #fff;background:#ece9d8;"><div style="left:4px;top:2px;width:0;height:0;border:2.5px solid transparent;border-top:0;border-bottom:3px solid #a8a498"></div></div>
<div style="left:438px;top:105px;width:14px;height:9px;box-sizing:border-box;border:1px solid;border-color:#fff #a8a498 #a8a498 #fff;background:#ece9d8;"><div style="left:4px;top:2px;width:0;height:0;border:2.5px solid transparent;border-bottom:0;border-top:3px solid #a8a498"></div></div>
<div style="left:462px;top:94px;width:100px;height:21px;box-sizing:border-box;border:1px solid;border-color:#9c9a90 #f4f4f0 #f4f4f0 #9c9a90;background:#fff;box-shadow:inset 1px 1px 0 #d0cec4;"></div>
<div class="t" style="left:465px;top:96px;height:16px;line-height:16px;font-size:14px;color:#000080;font-weight:bold;">0</div>
<div style="left:570px;top:94px;width:102px;height:21px;box-sizing:border-box;border:1px solid;border-color:#9c9a90 #f4f4f0 #f4f4f0 #9c9a90;background:#fff;box-shadow:inset 1px 1px 0 #d0cec4;"></div>
<div class="t" style="left:573px;top:96px;height:16px;line-height:16px;font-size:14px;color:#000080;letter-spacing:0.24px;font-weight:bold;">625142447</div>
<div style="left:462px;top:121px;width:100px;height:21px;box-sizing:border-box;border:1px solid;border-color:#9c9a90 #f4f4f0 #f4f4f0 #9c9a90;background:#d4d4ce;box-shadow:inset 1px 1px 0 #d0cec4;"></div>
<div class="t" style="left:465px;top:123px;height:16px;line-height:16px;font-size:14px;color:#8c8c88;font-weight:bold;">0</div>
<div style="left:570px;top:121px;width:102px;height:21px;box-sizing:border-box;border:1px solid;border-color:#9c9a90 #f4f4f0 #f4f4f0 #9c9a90;background:#fff;box-shadow:inset 1px 1px 0 #d0cec4;"></div>
<div class="t" style="left:573px;top:123px;height:16px;line-height:16px;font-size:14px;color:#800000;letter-spacing:0.06px;font-weight:bold;">135168</div>
<div style="left:395px;top:125px;width:59px;height:27px;box-sizing:border-box;border:1px solid;border-color:#f4f0d8 #6c6c68 #6c6c68 #f4f0d8;border-radius:3px;background:linear-gradient(to bottom,#dedede 0%,#cecece 18%,#c0c0c0 19%,#c8c8c8 45%,#b8b8b8 46%,#c0c0c0 72%,#aeaeae 73%,#a8a8a8 100%);"></div>
<div class="t" style="left:395px;top:125px;height:27px;line-height:27px;font-size:13px;color:#000;letter-spacing:-0.72px;width:59px;text-align:center;">Pause</div>
<div style="left:395px;top:161px;width:59px;height:52px;box-sizing:border-box;border:1px solid;border-color:#f4f0d8 #6c6c68 #6c6c68 #f4f0d8;border-radius:3px;background:linear-gradient(to bottom,#dedede 0%,#cecece 18%,#c0c0c0 19%,#c8c8c8 45%,#b8b8b8 46%,#c0c0c0 72%,#aeaeae 73%,#a8a8a8 100%);"></div>
<div class="t" style="left:394px;top:162px;height:52px;line-height:52px;font-size:12.5px;color:#f00000;letter-spacing:-0.07px;width:59px;text-align:center;">Stop</div>
<svg width="72" height="72" style="position:absolute;left:461px;top:147.5px" viewBox="-36 -36 72 72"><g><polygon points="0,-32.0 15.5,-16.5 0,-1.0 -15.5,-16.5" fill="#dcdcd6" stroke="#000" stroke-width="1.2"/><polyline points="-13.5,-16.5 0,-30.0 13.5,-16.5" fill="none" stroke="#fff" stroke-width="1"/><polygon points="16.5,-15.5 32.0,0 16.5,15.5 1.0,0" fill="#dcdcd6" stroke="#000" stroke-width="1.2"/><polyline points="3.0,0 16.5,-13.5 30.0,0" fill="none" stroke="#fff" stroke-width="1"/><polygon points="0,1.0 15.5,16.5 0,32.0 -15.5,16.5" fill="#dcdcd6" stroke="#000" stroke-width="1.2"/><polyline points="-13.5,16.5 0,3.0 13.5,16.5" fill="none" stroke="#fff" stroke-width="1"/><polygon points="-16.5,-15.5 -1.0,0 -16.5,15.5 -32.0,0" fill="#dcdcd6" stroke="#000" stroke-width="1.2"/><polyline points="-30.0,0 -16.5,-13.5 -3.0,0" fill="none" stroke="#fff" stroke-width="1"/><polygon points="0,-24.5 3.8,-17 -3.8,-17" fill="#0a8a0a"/><polygon points="0,24.5 3.8,17.5 -3.8,17.5" fill="#0a8a0a"/><polygon points="-24.5,0 -17,-3.8 -17,3.8" fill="#0a8a0a"/><polygon points="24.5,0 17,-3.8 17,3.8" fill="#0a8a0a"/></g></svg>
<div style="left:520px;top:153px;width:13px;height:13px;box-sizing:border-box;border:1px solid #b8b4a0;background:#ece9d8;"><svg width="13" height="13" style="position:absolute;left:-1px;top:-1px"><path d="M3.2 5.8 L5.6 8.4 L10.2 3.4" fill="none" stroke="#b0ac9c" stroke-width="2.7"/></svg></div>
<div class="t" style="left:545px;top:148px;height:14px;line-height:14px;font-size:11px;color:#000;letter-spacing:-0.35px;">[ block size ]</div>
<div class="t" style="left:609px;top:148px;height:14px;line-height:14px;font-size:11px;color:#000;letter-spacing:-0.39px;">[ timeout,ms ]</div>
<div style="left:544px;top:162px;width:59px;height:22px;box-sizing:border-box;border:1px solid;border-color:#9c9a90 #f4f4f0 #f4f4f0 #9c9a90;background:#fdfdfb;box-shadow:inset 1px 1px 0 #d0cec4;"></div>
<div style="left:585px;top:163px;width:17px;height:20px;box-sizing:border-box;border:1px solid;border-color:#fff #807c70 #807c70 #fff;background:#ece9d8;"><div style="left:3.5px;top:7px;width:0;height:0;border:4px solid transparent;border-bottom:0;border-top:4px solid #a8a498"></div></div>
<div class="t" style="left:547px;top:163px;height:20px;line-height:20px;font-size:13px;color:#b0aea4;letter-spacing:-0.35px;">256</div>
<div style="left:608px;top:162px;width:63px;height:22px;box-sizing:border-box;border:1px solid;border-color:#9c9a90 #f4f4f0 #f4f4f0 #9c9a90;background:#fff;box-shadow:inset 1px 1px 0 #d0cec4;"></div>
<div style="left:653px;top:163px;width:17px;height:20px;box-sizing:border-box;border:1px solid;border-color:#fff #807c70 #807c70 #fff;background:#ece9d8;"><div style="left:3.5px;top:7px;width:0;height:0;border:4px solid transparent;border-bottom:0;border-top:4px solid #000"></div></div>
<div class="t" style="left:611px;top:163px;height:20px;line-height:20px;font-size:13px;color:#000;letter-spacing:-0.64px;">1000</div>
<div style="left:544px;top:193px;width:127px;height:23px;box-sizing:border-box;border:1px solid;border-color:#9c9a90 #f4f4f0 #f4f4f0 #9c9a90;background:#ece9d8;box-shadow:inset 1px 1px 0 #d0cec4;"></div>
<div style="left:653px;top:194px;width:17px;height:21px;box-sizing:border-box;border:1px solid;border-color:#fff #807c70 #807c70 #fff;background:#ece9d8;"><div style="left:3.5px;top:7px;width:0;height:0;border:4px solid transparent;border-bottom:0;border-top:4px solid #000"></div></div>
<div class="t" style="left:547px;top:194px;height:21px;line-height:21px;font-size:14px;color:#000;letter-spacing:-0.18px;font-weight:bold;">End of test</div>
<div style="left:388px;top:225px;width:117px;height:223px;box-sizing:border-box;background:#dedcd8;border:1px solid;border-color:#a4a49c #fff #fff #a4a49c;"></div>
<div style="left:416px;top:235px;width:10px;height:19px;box-sizing:border-box;border:1px solid #000;background:#d0d0d0;"></div>
<div class="t" style="left:380px;top:241px;height:16px;line-height:16px;font-size:13px;color:#008080;width:33px;text-align:right;">5</div>
<div class="t" style="left:430px;top:241px;height:16px;line-height:16px;font-size:13px;color:#000;">316</div>
<div style="left:416px;top:266px;width:10px;height:19px;box-sizing:border-box;border:1px solid #000;background:#a8a8a8;"></div>
<div class="t" style="left:380px;top:272px;height:16px;line-height:16px;font-size:13px;color:#008080;width:33px;text-align:right;">20</div>
<div class="t" style="left:430px;top:272px;height:16px;line-height:16px;font-size:13px;color:#000;">223</div>
<div style="left:416px;top:297px;width:10px;height:19px;box-sizing:border-box;border:1px solid #000;background:#808080;"></div>
<div class="t" style="left:380px;top:303px;height:16px;line-height:16px;font-size:13px;color:#008080;width:33px;text-align:right;">50</div>
<div class="t" style="left:430px;top:303px;height:16px;line-height:16px;font-size:13px;color:#000;">1</div>
<div style="left:416px;top:328px;width:10px;height:19px;box-sizing:border-box;border:1px solid #000;background:#00ff00;"></div>
<div class="t" style="left:380px;top:334px;height:16px;line-height:16px;font-size:13px;color:#008080;width:33px;text-align:right;">200</div>
<div class="t" style="left:430px;top:334px;height:16px;line-height:16px;font-size:13px;color:#000;">0</div>
<div style="left:416px;top:359px;width:10px;height:19px;box-sizing:border-box;border:1px solid #000;background:#ff8000;"></div>
<div class="t" style="left:380px;top:365px;height:16px;line-height:16px;font-size:13px;color:#008080;width:33px;text-align:right;">600</div>
<div class="t" style="left:430px;top:365px;height:16px;line-height:16px;font-size:13px;color:#000;">0</div>
<div style="left:416px;top:390px;width:10px;height:19px;box-sizing:border-box;border:1px solid #000;background:#ff0000;"></div>
<div class="t" style="left:380px;top:396px;height:16px;line-height:16px;font-size:13px;color:#008080;width:33px;text-align:right;">&gt;  </div>
<div class="t" style="left:430px;top:396px;height:16px;line-height:16px;font-size:13px;color:#000;">0</div>
<div style="left:416px;top:420px;width:9px;height:18px;background:#0000ff;"></div>
<div class="t" style="left:416px;top:422px;height:16px;line-height:16px;font-size:14px;color:#ffff00;font-weight:bold;width:9px;text-align:center;transform:scaleX(1.35);">x</div>
<div class="t" style="left:380px;top:424px;height:16px;line-height:16px;font-size:13px;color:#008080;width:31px;text-align:right;">Err</div>
<div class="t" style="left:430px;top:424px;height:16px;line-height:16px;font-size:13px;color:#f00000;">0</div>
<div style="left:477px;top:227px;width:26px;height:14px;box-sizing:border-box;border:1px solid;border-color:#fff #807c70 #807c70 #fff;background:#ece9d8;border-radius:2px;"></div>
<div class="t" style="left:477px;top:227px;height:14px;line-height:14px;font-size:12px;color:#0000e0;width:26px;text-align:center;">RS</div>
<div class="t" style="left:475px;top:266px;width:42px;height:18px;line-height:18px;font-size:14px;font-weight:bold;color:#000080;text-align:center;transform:rotate(90deg);transform-origin:50% 50%;">to log:</div>
<div style="left:488px;top:304px;width:13px;height:13px;box-sizing:border-box;border:1px solid #a4a498;background:#fff;"></div>
<div style="left:488px;top:335px;width:13px;height:13px;box-sizing:border-box;border:1px solid #a4a498;background:#fff;"></div>
<div style="left:488px;top:365px;width:13px;height:13px;box-sizing:border-box;border:1px solid #a4a498;background:#fff;"><svg width="13" height="13" style="position:absolute;left:-1px;top:-1px"><path d="M3.2 5.8 L5.6 8.4 L10.2 3.4" fill="none" stroke="#08087c" stroke-width="2.7"/></svg></div>
<div style="left:488px;top:397px;width:13px;height:13px;box-sizing:border-box;border:1px solid #a4a498;background:#fff;"><svg width="13" height="13" style="position:absolute;left:-1px;top:-1px"><path d="M3.2 5.8 L5.6 8.4 L10.2 3.4" fill="none" stroke="#08087c" stroke-width="2.7"/></svg></div>
<div style="left:488px;top:425px;width:13px;height:13px;box-sizing:border-box;border:1px solid #a4a498;background:#fff;"><svg width="13" height="13" style="position:absolute;left:-1px;top:-1px"><path d="M3.2 5.8 L5.6 8.4 L10.2 3.4" fill="none" stroke="#08087c" stroke-width="2.7"/></svg></div>
<div style="left:508px;top:225px;width:168px;height:222px;box-sizing:border-box;background:#d6d7d1;border:1px solid #a4a49c;box-shadow:inset 1px 1px 0 #fff,1px 1px 0 #fff;"></div>
<div style="left:513px;top:232px;width:91px;height:20px;box-sizing:border-box;border:1px solid;border-color:#8c8a80 #fff #fff #8c8a80;background:#000;"></div>
<div class="t" style="left:518px;top:233px;height:16px;line-height:16px;font-size:13.5px;color:#00d8f8;font-weight:bold;">67</div>
<div class="t" style="left:559px;top:233px;height:16px;line-height:16px;font-size:13.5px;color:#00d8f8;width:41px;text-align:right;">Mb</div>
<div style="left:610px;top:232px;width:62px;height:20px;box-sizing:border-box;border:1px solid;border-color:#8c8a80 #fff #fff #8c8a80;background:#000;"></div>
<div class="t" style="left:616px;top:234px;height:17px;line-height:17px;font-size:15px;color:#fff;">0,0</div>
<div class="t" style="left:620px;top:234px;height:17px;line-height:17px;font-size:15px;color:#fff;width:48px;text-align:right;">%</div>
<div style="left:513px;top:260px;width:91px;height:20px;box-sizing:border-box;border:1px solid;border-color:#8c8a80 #fff #fff #8c8a80;background:#000;"></div>
<div class="t" style="left:518px;top:261px;height:16px;line-height:16px;font-size:14px;color:#38d050;letter-spacing:0.02px;font-weight:bold;">26624</div>
<div class="t" style="left:559px;top:261px;height:16px;line-height:16px;font-size:13.5px;color:#00d8f8;width:41px;text-align:right;">kb/s</div>
<svg width="14" height="14" style="position:absolute;left:617px;top:262.5px"><circle cx="7" cy="7" r="5.8" fill="#ece9d8" stroke="#1f5a9e" stroke-width="1.4"/></svg>
<div class="t" style="left:636px;top:263px;height:16px;line-height:16px;font-size:13px;color:#aca899;text-shadow:1px 1px 0 #fff;">verify</div>
<svg width="14" height="14" style="position:absolute;left:617px;top:284.5px"><circle cx="7" cy="7" r="5.8" fill="#ece9d8" stroke="#1f5a9e" stroke-width="1.4"/><circle cx="7" cy="7" r="2.6" fill="#a8a498"/></svg>
<div class="t" style="left:636px;top:285px;height:16px;line-height:16px;font-size:13px;color:#aca899;text-shadow:1px 1px 0 #fff;">read</div>
<svg width="14" height="14" style="position:absolute;left:617px;top:306.5px"><circle cx="7" cy="7" r="5.8" fill="#ece9d8" stroke="#1f5a9e" stroke-width="1.4"/></svg>
<div class="t" style="left:636px;top:307px;height:16px;line-height:16px;font-size:13px;color:#aca899;text-shadow:1px 1px 0 #fff;">write</div>
<div style="left:619px;top:299px;width:46px;height:3px;background:#f40008;border-radius:1.5px;"></div>
<div style="left:515px;top:291px;width:13px;height:13px;box-sizing:border-box;border:1px solid #b8b4a0;background:#ece9d8;"></div>
<div class="t" style="left:533px;top:291px;height:16px;line-height:16px;font-size:12.5px;color:#aca899;letter-spacing:-0.44px;text-shadow:1px 1px 0 #fff;">DDD Enable</div>
<div style="left:512px;top:332px;width:161px;height:31px;box-sizing:border-box;background:#cdc7bd;border:1px solid;border-color:#a4a49c #fff #fff #a4a49c;"></div>
<div style="left:519px;top:338px;width:25px;height:20px;box-sizing:border-box;border:1px solid;border-color:#807c70 #fff #fff #807c70;background:#d8d8d4;"></div>
<div style="left:560px;top:338px;width:25px;height:20px;box-sizing:border-box;border:1px solid;border-color:#fff #807c70 #807c70 #fff;background:#d8d8d4;"></div>
<div style="left:601px;top:338px;width:25px;height:20px;box-sizing:border-box;border:1px solid;border-color:#fff #807c70 #807c70 #fff;background:#d8d8d4;"></div>
<div style="left:641px;top:338px;width:25px;height:20px;box-sizing:border-box;border:1px solid;border-color:#fff #807c70 #807c70 #fff;background:#d8d8d4;"></div>
<svg width="160" height="31" style="position:absolute;left:512px;top:332px"><polygon points="12.5,9 12.5,23 29,16" fill="#22c410" stroke="#001800" stroke-width="1.2"/><polygon points="68,9 68,23 52,16" fill="#8c8c8c" stroke="#101010" stroke-width="1.2"/><polygon points="91,10 91,22 96,16" fill="#909090" stroke="#202020" stroke-width="1"/><polygon points="111,10 111,22 106,16" fill="#909090" stroke="#202020" stroke-width="1"/><polygon points="132,10 132,22 138,16" fill="#707070" stroke="#202020" stroke-width="1"/><polygon points="151,10 151,22 145,16" fill="#909090" stroke="#202020" stroke-width="1"/><rect x="140" y="9" width="3" height="14" fill="#000"/></svg>
<div class="t" style="left:601px;top:338.5px;height:20px;line-height:20px;font-size:17px;color:#000;font-weight:bold;width:25px;text-align:center;">?</div>
<div style="left:512px;top:368px;width:161px;height:47px;box-sizing:border-box;background:#c9c9c1;border:1px solid;border-color:#a4a49c #fff #fff #a4a49c;"></div>
<svg width="14" height="14" style="position:absolute;left:520.5px;top:373px"><circle cx="7" cy="7" r="5.8" fill="#fcfcf8" stroke="#1f5a9e" stroke-width="1.4"/></svg>
<div class="t" style="left:539px;top:373.5px;height:16px;line-height:16px;font-size:13px;color:#000;letter-spacing:-0.17px;">Ignore</div>
<svg width="14" height="14" style="position:absolute;left:520.5px;top:393.5px"><circle cx="7" cy="7" r="5.8" fill="#fcfcf8" stroke="#1f5a9e" stroke-width="1.4"/><circle cx="7" cy="7" r="2.6" fill="#000080"/></svg>
<div class="t" style="left:539px;top:393.5px;height:16px;line-height:16px;font-size:13px;color:#000;letter-spacing:-0.73px;">Remap</div>
<svg width="14" height="14" style="position:absolute;left:594.5px;top:373px"><circle cx="7" cy="7" r="5.8" fill="#fcfcf8" stroke="#1f5a9e" stroke-width="1.4"/></svg>
<div class="t" style="left:613px;top:373.5px;height:16px;line-height:16px;font-size:13px;color:#000;letter-spacing:-0.74px;">Erase</div>
<svg width="14" height="14" style="position:absolute;left:594.5px;top:393.5px"><circle cx="7" cy="7" r="5.8" fill="#fcfcf8" stroke="#1f5a9e" stroke-width="1.4"/></svg>
<div class="t" style="left:613px;top:393.5px;height:16px;line-height:16px;font-size:13px;color:#000;letter-spacing:-0.42px;">Restore</div>
<div style="left:521px;top:410px;width:62px;height:3px;background:#f40008;border-radius:1.5px;"></div>
<div style="left:516px;top:427px;width:13px;height:13px;box-sizing:border-box;border:1px solid #a4a498;background:#fff;"><svg width="13" height="13" style="position:absolute;left:-1px;top:-1px"><path d="M3.2 5.8 L5.6 8.4 L10.2 3.4" fill="none" stroke="#08087c" stroke-width="2.7"/></svg></div>
<div class="t" style="left:534px;top:426px;height:17px;line-height:17px;font-size:13px;color:#000;letter-spacing:-0.52px;">Grid</div>
<div style="left:572px;top:422px;width:101px;height:22px;box-sizing:border-box;border:1px solid;border-color:#8c8a80 #fff #fff #8c8a80;background:#000;"></div>
<div style="left:573px;top:423px;width:99px;height:20px;background:#002c00;overflow:hidden;"><div class="t" style="left:0;top:2px;width:99px;height:20px;line-height:20px;font-family:'Liberation Mono',monospace;font-size:21px;font-weight:bold;color:#ffff00;letter-spacing:-0.6px;">03:15:37</div><div style="left:0;top:0;width:99px;height:20px;background:repeating-linear-gradient(to right,#000 0,#000 1px,transparent 1px,transparent 2px),repeating-linear-gradient(to bottom,transparent 0,transparent 1px,#000 1px,#000 2px);"></div><div style="left:0;top:0;width:99px;height:3px;background:#000"></div><div style="left:0;top:18px;width:99px;height:2px;background:#000"></div></div>
<div style="left:683px;top:73px;width:77px;height:406px;background:#a4a5ab;"></div>
<div style="left:689px;top:89px;width:63px;height:45px;box-sizing:border-box;border:1px solid #e8e0bc;border-radius:3px;background:linear-gradient(to bottom,#fc4040 0%,#fa3434 28%,#f82424 30%,#f61a1a 55%,#f20e0e 57%,#ee0808 100%);box-shadow:inset 0 -1px 0 #a80000;"></div>
<div class="t" style="left:688px;top:90px;height:45px;line-height:45px;font-size:13px;color:#fff;letter-spacing:-0.13px;width:63px;text-align:center;text-shadow:0 0 1px rgba(0,0,0,.5);">Break All</div>
<div style="left:707px;top:141px;width:28px;height:10px;box-sizing:border-box;border:1px solid #000;background:#8a8a8a;"></div>
<div style="left:689px;top:173px;width:63px;height:25px;box-sizing:border-box;border:1px solid #e8e0bc;border-radius:3px;background:linear-gradient(to bottom,#8e8e8e 0%,#7e7e7e 40%,#6a6a6a 55%,#686868 70%,#808080 88%,#8c8c8c 100%);box-shadow:inset 0 0 0 1px #0c0c0c;"></div>
<div class="t" style="left:688px;top:173px;height:25px;line-height:25px;font-size:13px;color:#fff;letter-spacing:-0.41px;width:63px;text-align:center;text-shadow:0 0 1px rgba(0,0,0,.5);"><u>S</u>leep</div>
<div style="left:689px;top:217px;width:63px;height:25px;box-sizing:border-box;border:1px solid #e8e0bc;border-radius:3px;background:linear-gradient(to bottom,#8e8e8e 0%,#7e7e7e 40%,#6a6a6a 55%,#686868 70%,#808080 88%,#8c8c8c 100%);box-shadow:inset 0 0 0 1px #0c0c0c;"></div>
<div class="t" style="left:688px;top:217px;height:25px;line-height:25px;font-size:13px;color:#fff;letter-spacing:-0.42px;width:63px;text-align:center;text-shadow:0 0 1px rgba(0,0,0,.5);">Re<u>c</u>all</div>
<svg width="45" height="28" style="position:absolute;left:698px;top:301px"><defs><radialGradient id="vu" cx="50%" cy="80%" r="62%"><stop offset="0" stop-color="#f8f4d0"/><stop offset="0.5" stop-color="#e0d890"/><stop offset="1" stop-color="#b4b054"/></radialGradient></defs><rect x="0.5" y="0.5" width="44" height="27" fill="url(#vu)" stroke="#747448"/><path d="M5 16 Q10 8 22 5.5 L29 4" fill="none" stroke="#282818" stroke-width="1.2"/><path d="M29 4 Q36 6 40 15" fill="none" stroke="#b04040" stroke-width="1.1"/><line x1="24.5" y1="17" x2="26" y2="4" stroke="#000" stroke-width="1"/><rect x="14.5" y="17" width="16" height="7" fill="#6c6818" stroke="#4c480c" stroke-width="1"/></svg>
<div style="left:689px;top:339px;width:25px;height:13px;box-sizing:border-box;border:1px solid #000;background:#00ff00;"></div>
<div style="left:729px;top:339px;width:25px;height:13px;box-sizing:border-box;border:1px solid #000;background:#8c8c8c;"></div>
<div class="t" style="left:690.5px;top:353px;height:16px;line-height:16px;font-size:12px;color:#000;letter-spacing:-1.14px;">Rd</div>
<div class="t" style="left:731px;top:353px;height:16px;line-height:16px;font-size:12px;color:#000;letter-spacing:1.02px;">Wrt</div>
<div style="left:689px;top:375px;width:63px;height:25px;box-sizing:border-box;border:1px solid #e8e0bc;border-radius:3px;background:linear-gradient(to bottom,#c40404 0%,#b80000 22%,#980000 24%,#900000 60%,#7c0000 62%,#680000 100%);box-shadow:inset 0 0 0 1px #0c0c0c;"></div>
<div class="t" style="left:688px;top:375px;height:25px;line-height:25px;font-size:13px;color:#fff;letter-spacing:-0.89px;width:63px;text-align:center;text-shadow:0 0 1px rgba(0,0,0,.5);">Passp</div>
<div style="left:689px;top:421px;width:63px;height:25px;box-sizing:border-box;border:1px solid #e8e0bc;border-radius:3px;background:linear-gradient(to bottom,#0000c8 0%,#0000b0 25%,#000098 50%,#000080 75%,#000060 100%);box-shadow:inset 0 0 0 1px #0c0c0c;"></div>
<div class="t" style="left:688px;top:421px;height:25px;line-height:25px;font-size:13px;color:#ffff00;letter-spacing:-0.34px;width:63px;text-align:center;text-shadow:0 0 1px rgba(0,0,0,.5);"><u>P</u>ower</div>
<div style="left:683px;top:479px;width:78px;height:81px;box-sizing:border-box;background:#d9d9d5;border-top:1px solid #b8b8b0;border-left:1px solid #b8b8b0;"></div>
<div style="left:688px;top:488px;width:13px;height:13px;box-sizing:border-box;border:1px solid #a4a498;background:#fff;"></div>
<div class="t" style="left:706px;top:486px;height:17px;line-height:17px;font-size:14px;color:#000080;letter-spacing:-1.00px;font-weight:bold;">sound</div>
<div class="t" style="left:688px;top:515px;height:14px;line-height:14px;font-size:11px;color:#000;letter-spacing:-0.45px;">API number</div>
<div style="left:687px;top:529px;width:70px;height:25px;box-sizing:border-box;border:1px solid #c4c0b0;background:#ece9d8;"></div>
<div style="left:702px;top:529px;width:1px;height:25px;background:#c4c0b0;"></div>
<div style="left:741px;top:529px;width:1px;height:25px;background:#c4c0b0;"></div>
<div class="t" style="left:687px;top:530px;height:22px;line-height:22px;font-size:16px;color:#a8a498;font-weight:bold;width:15px;text-align:center;">−</div>
<div class="t" style="left:703px;top:531px;height:22px;line-height:22px;font-size:14px;color:#a8a498;width:38px;text-align:center;">2</div>
<div class="t" style="left:742px;top:530px;height:22px;line-height:22px;font-size:16px;color:#a8a498;font-weight:bold;width:15px;text-align:center;">+</div>
<div style="left:5px;top:457px;width:676px;height:103px;background:#effdec;"></div>
<div style="left:71px;top:457px;width:1px;height:103px;background:#eee0d8;"></div>
<div style="left:4px;top:457px;width:1px;height:103px;background:#8c8478;"></div>
<div style="left:5px;top:457px;width:1px;height:103px;background:#fafaf6;"></div>
<div style="left:5px;top:475px;width:658px;height:1px;background:#f0e6de;"></div>
<div style="left:5px;top:492px;width:658px;height:1px;background:#f0e6de;"></div>
<div style="left:5px;top:509px;width:658px;height:1px;background:#f0e6de;"></div>
<div style="left:5px;top:526px;width:658px;height:1px;background:#f0e6de;"></div>
<div style="left:5px;top:543px;width:658px;height:1px;background:#f0e6de;"></div>
<div class="t" style="left:16px;top:460px;height:16px;line-height:16px;font-size:12px;color:#000;letter-spacing:0.66px;">7:34:48</div>
<div class="t" style="left:76px;top:460px;height:16px;line-height:16px;font-size:12px;color:#000;letter-spacing:0.27px;">Get passport... OK</div>
<div class="t" style="left:16px;top:477px;height:16px;line-height:16px;font-size:12px;color:#000;letter-spacing:0.66px;">7:34:48</div>
<div class="t" style="left:76px;top:477px;height:16px;line-height:16px;font-size:12px;color:#000;letter-spacing:0.24px;">Model: TOSHIBA MK3265GSX; Capacity: 625142448 LBAs</div>
<div class="t" style="left:16px;top:494px;height:16px;line-height:16px;font-size:12px;color:#000;letter-spacing:0.66px;">7:35:51</div>
<div class="t" style="left:76px;top:494px;height:16px;line-height:16px;font-size:12px;color:#000;letter-spacing:0.27px;">Get passport... OK</div>
<div class="t" style="left:16px;top:511px;height:16px;line-height:16px;font-size:12px;color:#000;letter-spacing:0.66px;">7:35:52</div>
<div class="t" style="left:76px;top:511px;height:16px;line-height:16px;font-size:12px;color:#0000f4;letter-spacing:0.30px;">Recallibration... OK</div>
<div class="t" style="left:16px;top:528px;height:16px;line-height:16px;font-size:12px;color:#000;letter-spacing:0.66px;">7:35:52</div>
<div class="t" style="left:76px;top:528px;height:16px;line-height:16px;font-size:12px;color:#0000f4;letter-spacing:0.36px;">Starting Reading, LBA=0..625142447, sequential access w. REMAP, tio 1000ms</div>
<div style="left:679px;top:457px;width:4px;height:103px;background:#f2f2ee;"></div>
<div style="left:663px;top:457px;width:16px;height:103px;background:#f4f4ee;"></div>
<div style="left:663px;top:458px;width:16px;height:17px;box-sizing:border-box;border:1px solid #fff;border-radius:2px;background:linear-gradient(to right,#c8d8fc,#b8ccf8);box-shadow:0 0 0 1px #98b0e8 inset;"><svg width="14" height="15" style="position:absolute;left:0;top:0"><path d="M3.5 9.5 L7 6 L10.5 9.5" fill="none" stroke="#4d6185" stroke-width="2"/></svg></div>
<div style="left:663px;top:530px;width:16px;height:11px;box-sizing:border-box;border:1px solid #fff;border-radius:2px;background:linear-gradient(to right,#c8d8fc,#b8ccf8);box-shadow:0 0 0 1px #98b0e8 inset;"></div>
<div style="left:663px;top:543px;width:16px;height:17px;box-sizing:border-box;border:1px solid #fff;border-radius:2px;background:linear-gradient(to right,#c8d8fc,#b8ccf8);box-shadow:0 0 0 1px #98b0e8 inset;"><svg width="14" height="15" style="position:absolute;left:0;top:0"><path d="M3.5 5.5 L7 9 L10.5 5.5" fill="none" stroke="#4d6185" stroke-width="2"/></svg></div>
<div style="left:0px;top:30px;width:4px;height:534px;background:linear-gradient(to right,#0019cf,#0831d9 25%,#166aee 50%,#0855dd 100%);"></div>
<div style="left:761px;top:30px;width:4px;height:534px;background:linear-gradient(to left,#0019cf,#0831d9 25%,#166aee 50%,#0855dd 100%);"></div>
<div style="left:0px;top:560px;width:765px;height:4px;background:linear-gradient(to top,#0019cf,#0831d9 25%,#166aee 50%,#0855dd 100%);"></div>
</div></body></html>
